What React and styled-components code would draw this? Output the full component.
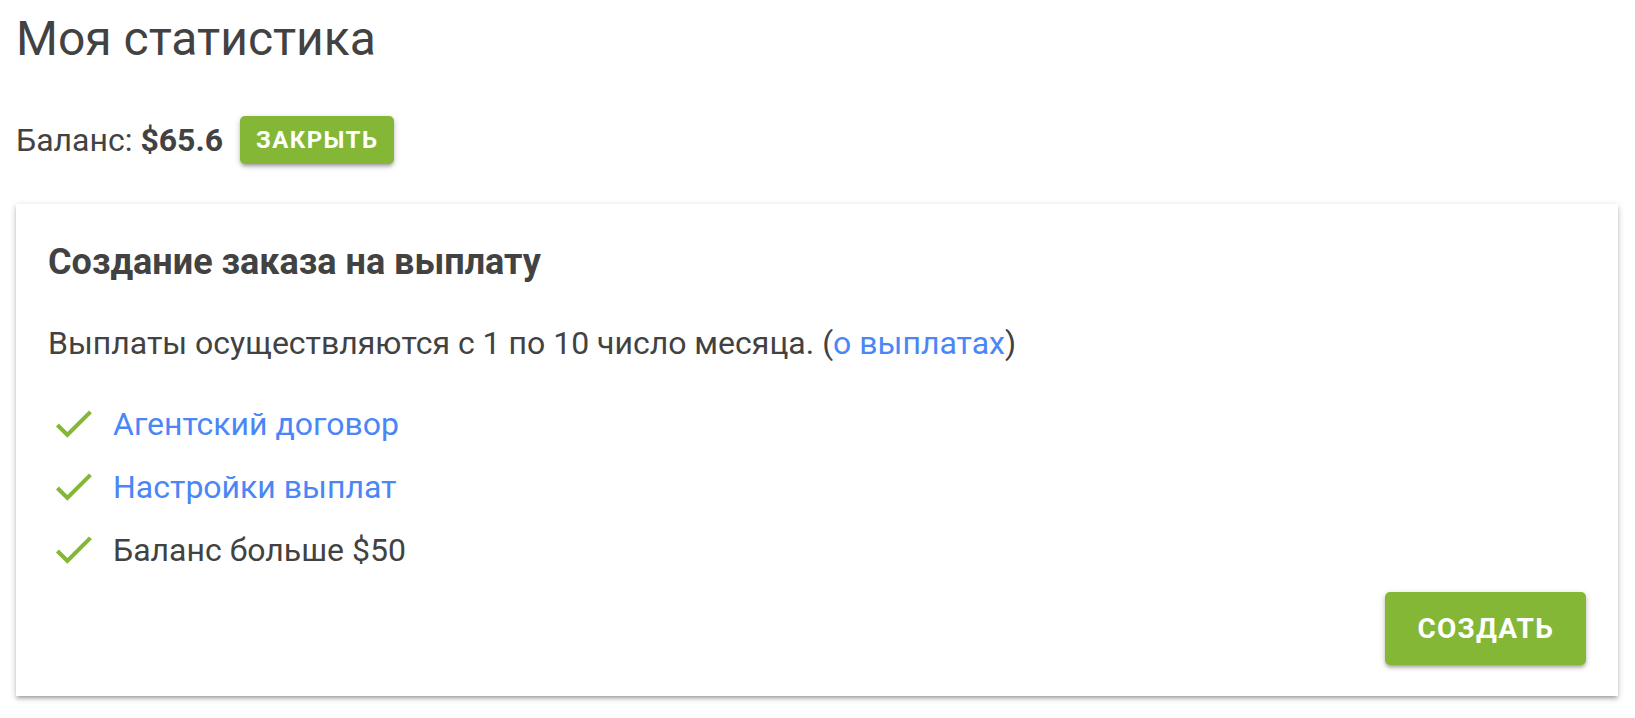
import React from 'react';
import styled, { createGlobalStyle } from 'styled-components';

const GlobalStyle = createGlobalStyle`
  html, body {
    margin: 0;
    padding: 0;
    background: #fff;
  }
  body {
    font-family: Roboto, 'Liberation Sans', sans-serif;
    color: #424242;
  }
`;

const Page = styled.div`
  min-height: 718px;
  box-sizing: border-box;
  padding: 0 17px 23px 16px;
`;

const Title = styled.h1`
  margin: 0;
  padding-top: 9px;
  font-size: 48px;
  font-weight: 400;
  line-height: 60px;
  color: #424242;
`;

const BalanceRow = styled.div`
  display: flex;
  align-items: center;
  gap: 17px;
  margin-top: 47px;
  font-size: 32px;
`;

const Amount = styled.b`
  font-weight: 700;
`;

const Button = styled.button`
  border: none;
  border-radius: 5px;
  background: #85b737;
  color: #fff;
  font-family: Roboto, 'Liberation Sans', sans-serif;
  font-weight: 700;
  text-transform: uppercase;
  cursor: pointer;
  box-shadow: 0 3px 3px 0 rgba(0, 0, 0, 0.14), 0 4px 2px -3px rgba(0, 0, 0, 0.12),
    0 2px 6px 0 rgba(0, 0, 0, 0.2);
  height: ${(p) => (p.$large ? '73px' : '48px')};
  padding: ${(p) => (p.$large ? '0 32px' : '0 16px')};
  font-size: ${(p) => (p.$large ? '28px' : '24px')};
  letter-spacing: ${(p) => (p.$large ? '1.2px' : '1.4px')};
`;

const Card = styled.section`
  margin-top: 40px;
  background: #fff;
  padding: 32px 32px 31px 32px;
  box-shadow: 0 3px 3px 0 rgba(0, 0, 0, 0.14), 0 4px 2px -3px rgba(0, 0, 0, 0.12),
    0 2px 7px 0 rgba(0, 0, 0, 0.2);
`;

const CardTitle = styled.h2`
  margin: 0;
  font-size: 36px;
  font-weight: 700;
  line-height: 52px;
`;

const Text = styled.p`
  margin: 33px 0 0;
  font-size: 32px;
  line-height: 44px;
`;

const Link = styled.a`
  color: #4a86f7;
  text-decoration: none;
`;

const List = styled.ul`
  list-style: none;
  margin: 27px 0 0;
  padding: 0;
`;

const Item = styled.li`
  display: flex;
  align-items: center;
  gap: 15px;
  height: 63px;
  font-size: 32px;
  padding-left: 1px;
`;

const Footer = styled.div`
  display: flex;
  justify-content: flex-end;
  margin-top: 11px;
`;

const Check = () => (
  <svg width="49" height="49" viewBox="0 0 24 24">
    <path d="M9 16.17L4.83 12l-1.42 1.41L9 19 21 7l-1.41-1.41z" fill="#85b737" />
  </svg>
);

const items = [
  { label: 'Агентский договор', link: true },
  { label: 'Настройки выплат', link: true },
  { label: 'Баланс больше $50', link: false },
];

export default function App() {
  return (
    <Page>
      <GlobalStyle />
      <Title>Моя статистика</Title>
      <BalanceRow>
        <span>
          Баланс: <Amount>$65.6</Amount>
        </span>
        <Button>Закрыть</Button>
      </BalanceRow>
      <Card>
        <CardTitle>Создание заказа на выплату</CardTitle>
        <Text>
          Выплаты осуществляются с 1 по 10 число месяца. (<Link href="#">о выплатах</Link>)
        </Text>
        <List>
          {items.map((it) => (
            <Item key={it.label}>
              <Check />
              {it.link ? <Link href="#">{it.label}</Link> : <span>{it.label}</span>}
            </Item>
          ))}
        </List>
        <Footer>
          <Button $large>Создать</Button>
        </Footer>
      </Card>
    </Page>
  );
}
